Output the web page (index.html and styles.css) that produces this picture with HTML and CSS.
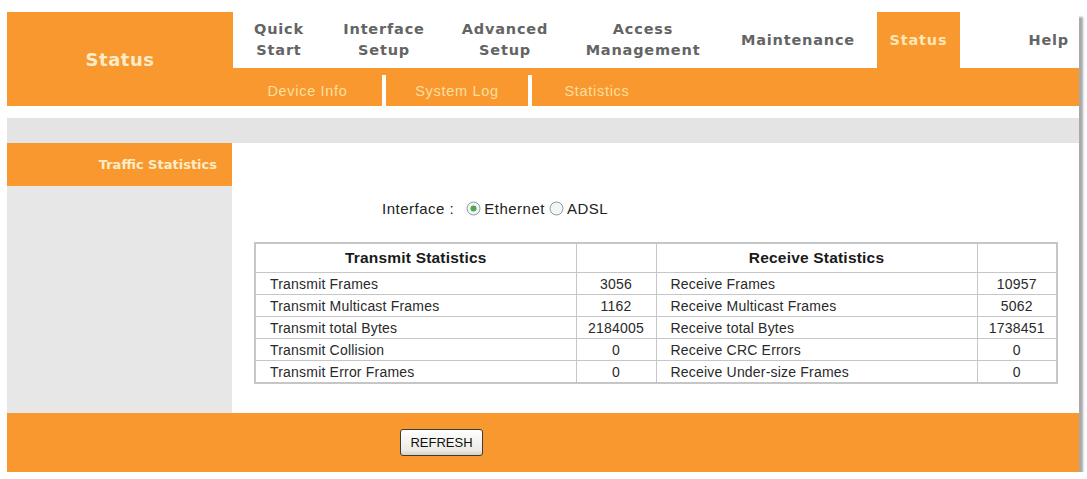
FILE: index.html
```html
<!DOCTYPE html>
<html>
<head>
<meta charset="utf-8">
<title>Status - Statistics</title>
<link rel="stylesheet" href="styles.css">
</head>
<body>
<div class="page">
  <div class="header">
    <div class="brand">Status</div>
    <div class="nav-area">
      <div class="tabs">
        <div class="tab t-quick">Quick<br>Start</div>
        <div class="tab t-iface">Interface<br>Setup</div>
        <div class="tab t-adv">Advanced<br>Setup</div>
        <div class="tab t-access">Access<br>Management</div>
        <div class="tab t-maint">Maintenance</div>
        <div class="tab t-status active">Status</div>
        <div class="tab t-help">Help</div>
      </div>
      <div class="subnav">
        <div class="sub s1">Device Info</div>
        <div class="sub s2">System Log</div>
        <div class="sub s3">Statistics</div>
      </div>
    </div>
  </div>
  <div class="band"></div>
  <div class="main">
    <div class="side">
      <div class="side-title">Traffic Statistics</div>
    </div>
    <div class="content">
      <div class="iface-row">
        <span class="label">Interface :</span>
        <span class="radio">
          <svg width="15" height="15" viewBox="0 0 15 15"><circle cx="7.5" cy="7.5" r="6.5" fill="#f4f6f6" stroke="#8d9ba6" stroke-width="1"/><circle cx="7.5" cy="7.5" r="3" fill="#4ea64e"/></svg>
        </span>
        <span class="opt">Ethernet</span>
        <span class="radio">
          <svg width="15" height="15" viewBox="0 0 15 15"><circle cx="7.5" cy="7.5" r="6.5" fill="#f4f6f6" stroke="#8d9ba6" stroke-width="1"/></svg>
        </span>
        <span class="opt">ADSL</span>
      </div>
      <table class="stats">
        <colgroup>
          <col class="c-name"><col class="c-val"><col class="c-name"><col class="c-val">
        </colgroup>
        <tr class="head">
          <th>Transmit Statistics</th><th></th><th>Receive Statistics</th><th></th>
        </tr>
        <tr><td class="n">Transmit Frames</td><td class="v">3056</td><td class="n">Receive Frames</td><td class="v">10957</td></tr>
        <tr><td class="n">Transmit Multicast Frames</td><td class="v">1162</td><td class="n">Receive Multicast Frames</td><td class="v">5062</td></tr>
        <tr><td class="n">Transmit total Bytes</td><td class="v">2184005</td><td class="n">Receive total Bytes</td><td class="v">1738451</td></tr>
        <tr><td class="n">Transmit Collision</td><td class="v">0</td><td class="n">Receive CRC Errors</td><td class="v">0</td></tr>
        <tr><td class="n">Transmit Error Frames</td><td class="v">0</td><td class="n">Receive Under-size Frames</td><td class="v">0</td></tr>
      </table>
    </div>
  </div>
  <div class="footer">
    <button class="btn" type="button">REFRESH</button>
  </div>
</div>
</body>
</html>
```

FILE: styles.css
```css
html, body {
  margin: 0;
  padding: 0;
  background: #ffffff;
}
body {
  font-family: "Liberation Sans", Arial, sans-serif;
  color: #222;
}
.page {
  margin: 12px 0 0 7px;
  width: 1072px;
  background: #ffffff;
  box-shadow: 4px 5px 2px #a9a9a9;
}
.header {
  display: flex;
  height: 94px;
}
.brand {
  width: 226px;
  background: #f8982f;
  color: #fdeccb;
  font-family: "DejaVu Sans", Verdana, sans-serif;
  font-weight: bold;
  font-size: 18px;
  letter-spacing: 0.5px;
  display: flex;
  align-items: center;
  justify-content: center;
}
.nav-area {
  flex: 1;
  display: flex;
  flex-direction: column;
}
.tabs {
  height: 56px;
  display: flex;
}
.tab {
  display: flex;
  align-items: center;
  justify-content: center;
  text-align: center;
  font-family: "DejaVu Sans", Verdana, sans-serif;
  font-weight: bold;
  font-size: 14.5px;
  letter-spacing: 0.8px;
  line-height: 21px;
  color: #646464;
}
.t-quick { width: 92px; }
.t-iface { width: 118px; }
.t-adv { width: 124px; }
.t-access { width: 152px; }
.t-maint { width: 158px; }
.t-status { width: 83px; }
.t-help {
  flex: 1;
  justify-content: flex-end;
  padding-right: 10px;
}
.tab.active {
  background: #f8982f;
  color: #fde6b6;
}
.subnav {
  height: 38px;
  background: #f8982f;
  display: flex;
  align-items: flex-end;
}
.sub {
  height: 31px;
  box-sizing: border-box;
  display: flex;
  align-items: center;
  justify-content: center;
  font-size: 14.5px;
  letter-spacing: 0.7px;
  color: #fddf9e;
}
.s1 { width: 149px; }
.s2 { width: 146px; border-left: 4px solid #ffffff; }
.s3 { width: 134px; border-left: 4px solid #ffffff; }
.band {
  margin-top: 12px;
  height: 25px;
  background: #e4e4e4;
}
.main {
  display: flex;
  height: 270px;
}
.side {
  width: 226px;
  background: #e7e7e7;
}
.side-title {
  height: 43px;
  background: #f8982f;
  color: #fdecc8;
  font-family: "DejaVu Sans", Verdana, sans-serif;
  font-weight: bold;
  font-size: 13px;
  display: flex;
  align-items: center;
  justify-content: flex-end;
  padding-right: 15px;
}
.content {
  flex: 1;
  padding: 55px 21px 0 22px;
}
.iface-row {
  height: 20px;
  display: flex;
  align-items: center;
  margin-left: 128px;
  font-size: 15px;
  letter-spacing: 0.5px;
  color: #222;
}
.label {
  margin-right: 12px;
}
.radio {
  display: flex;
  margin-right: 3px;
}
.opt {
  margin-right: 4px;
}
.stats {
  margin-top: 24px;
  width: 803px;
  border-collapse: collapse;
  table-layout: fixed;
  border: 2px solid #c6c6c6;
  font-size: 14px;
  letter-spacing: 0.2px;
  color: #2a2a2a;
}
.c-name { width: 321px; }
.c-val { width: 80px; }
.stats th, .stats td {
  border: 1px solid #c6c6c6;
  padding: 0;
}
.stats th {
  height: 28px;
  font-size: 15.5px;
  font-weight: bold;
  color: #1a1a1a;
  text-align: center;
}
.stats td {
  height: 21px;
}
.stats td.n {
  padding-left: 14px;
}
.stats td.v {
  text-align: center;
}
.footer {
  height: 59px;
  background: #f8982f;
  display: flex;
  align-items: center;
  padding-left: 393px;
}
.btn {
  width: 83px;
  height: 27px;
  font-family: "Liberation Sans", Arial, sans-serif;
  font-size: 13px;
  color: #111;
  background: linear-gradient(#ffffff, #ecebe6 80%, #d6d0c5);
  border: 1px solid #3c3c3c;
  border-radius: 3px;
  padding: 0;
}
```
